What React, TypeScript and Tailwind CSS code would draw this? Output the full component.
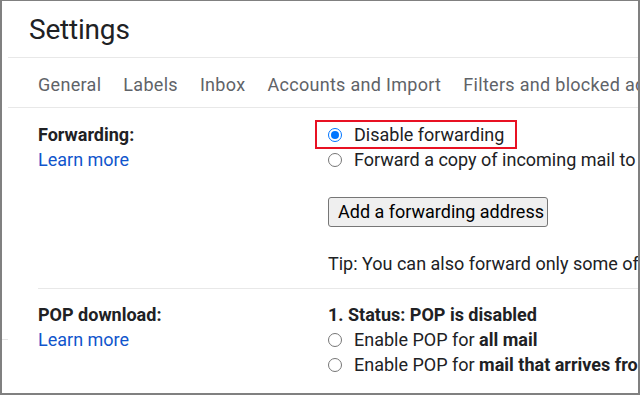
import React from "react";

const Radio = ({ checked }: { checked?: boolean }) =>
  checked ? (
    <span className="flex h-[14px] w-[14px] shrink-0 items-center justify-center rounded-full border-[1.5px] border-[#0075ff] bg-white">
      <span className="h-[8px] w-[8px] rounded-full bg-[#0075ff]" />
    </span>
  ) : (
    <span className="h-[14px] w-[14px] shrink-0 rounded-full border border-[#767676] bg-white" />
  );

export default function App() {
  return (
    <div
      className="flex h-[395px] w-[640px] overflow-hidden border-b-2 border-l-2 border-r-2 border-t border-[#808080] bg-white text-[#202124]"
      style={{ fontFamily: "Roboto, 'Liberation Sans', sans-serif" }}
    >
      {/* left gutter */}
      <div className="flex w-[6px] shrink-0 flex-col">
        <div className="mt-[338px] h-px w-full bg-[#e5e5e5]" />
      </div>

      <div className="flex min-w-0 flex-1 flex-col">
        {/* header */}
        <div className="flex h-[57px] items-start border-b border-[#e8e8e8] pl-[21px] pt-[11px]">
          <h1 className="whitespace-nowrap text-[28px] leading-[36px] font-normal tracking-[-0.2px] text-[#202124]">Settings</h1>
        </div>

        {/* tabs */}
        <div className="flex h-[50px] items-center gap-[22px] whitespace-nowrap border-b border-[#e8e8e8] pl-[30px] pt-[3px] text-[18px] tracking-[0.3px] text-[#5f6368]">
          <span>General</span>
          <span>Labels</span>
          <span>Inbox</span>
          <span>Accounts and Import</span>
          <span>Filters and blocked addresses</span>
        </div>

        {/* content */}
        <div className="flex flex-col pl-[30px] text-[18px] leading-[25px]">
          {/* Forwarding */}
          <div className="flex border-b border-[#e8e8e8] pb-[12px] pt-[14px]">
            <div className="flex w-[290px] shrink-0 flex-col">
              <span className="font-bold">Forwarding:</span>
              <span className="text-[#1155cc]">Learn more</span>
            </div>
            <div className="flex min-w-0 flex-col whitespace-nowrap">
              <div className="relative flex items-center gap-[12px]">
                <Radio checked />
                <span>Disable forwarding</span>
                <span className="pointer-events-none absolute left-[-13px] top-[-2px] h-[29px] w-[202px] border-2 border-[#e81123]" />
              </div>
              <div className="flex items-center gap-[12px]">
                <Radio />
                <span>Forward a copy of incoming mail to</span>
              </div>
              <div className="mt-[25px] flex">
                <button className="h-[30px] w-[220px] rounded-[3px] border border-[#767676] bg-[#efefef] text-left pl-[9px] text-[18px] leading-[28px] text-[#000]">
                  Add a forwarding address
                </button>
              </div>
              <div className="mt-[24px]">Tip: You can also forward only some of your mail by creating a filter!</div>
            </div>
          </div>

          {/* POP */}
          <div className="flex pt-[13px]">
            <div className="flex w-[290px] shrink-0 flex-col">
              <span className="font-bold">POP download:</span>
              <span className="text-[#1155cc]">Learn more</span>
            </div>
            <div className="flex min-w-0 flex-col whitespace-nowrap">
              <span className="font-bold">1. Status: POP is disabled</span>
              <div className="flex items-center gap-[12px]">
                <Radio />
                <span>
                  Enable POP for <b>all mail</b>
                </span>
              </div>
              <div className="flex items-center gap-[12px]">
                <Radio />
                <span>
                  Enable POP for <b>mail that arrives from now on</b>
                </span>
              </div>
            </div>
          </div>
        </div>
      </div>
    </div>
  );
}
